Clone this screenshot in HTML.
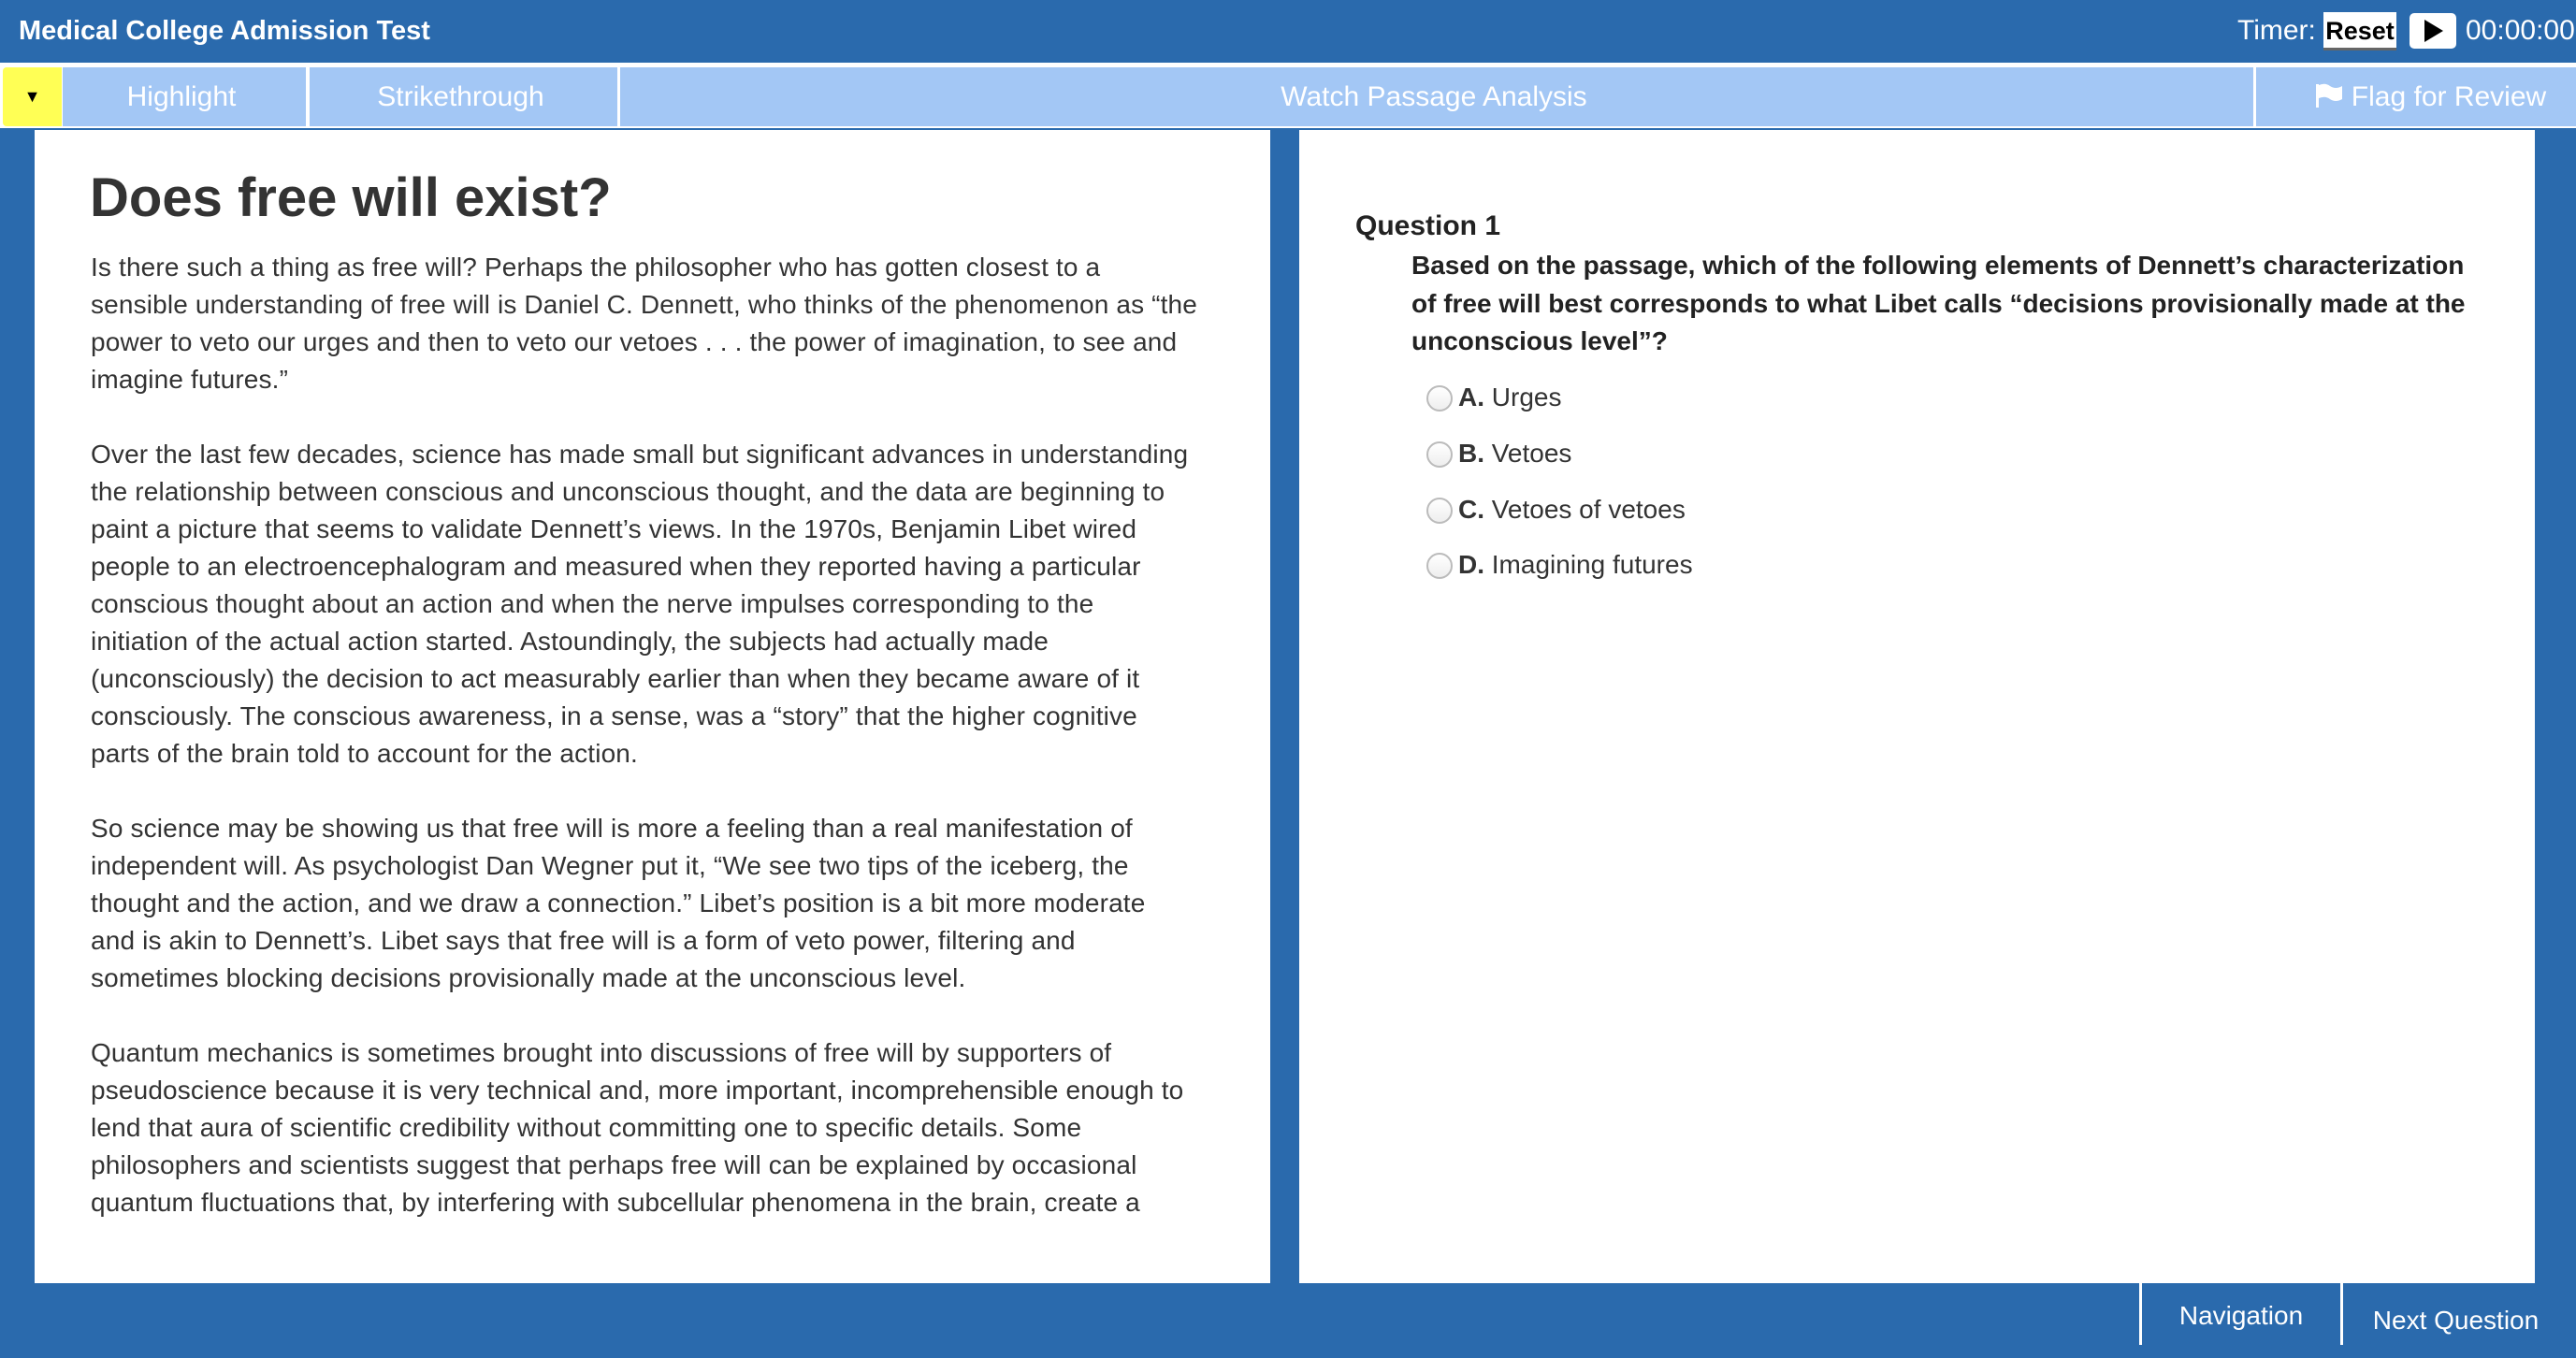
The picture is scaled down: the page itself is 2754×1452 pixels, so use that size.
<!DOCTYPE html>
<html><head><meta charset="utf-8"><style>
*{margin:0;padding:0;box-sizing:border-box}
body{width:2754px;height:1438px;background:#2a6aad;font-family:"Liberation Sans",Arial,sans-serif;position:relative;overflow:hidden}
.abs{position:absolute}
.title{left:20px;top:14px;font-size:29px;font-weight:bold;color:#fff;line-height:38px}
.tb{top:72px;height:63px;background:#a3c7f5;color:#fff;font-size:30px;line-height:63px;text-align:center}
.panel{background:#fff;top:139px;height:1233px}
.lt{left:97px;top:266px;width:1260px;font-size:28px;letter-spacing:0.15px;line-height:40px;color:#333;white-space:nowrap}
.lt p{margin-bottom:40px}
.q{color:#222}
.opt{left:1525px;font-size:28px;color:#333;line-height:40px}
.opt i{display:inline-block;width:28px;height:28px;border:2px solid #bbb;border-radius:50%;vertical-align:-6px;margin-right:6px;background:linear-gradient(#fff,#eee)}
.bb{color:#fff;font-size:28px;top:1372px;height:66px;border-left:3px solid #fff}
</style></head><body>
<div class="abs title">Medical College Admission Test</div>
<div class="abs" style="left:2392px;top:14px;font-size:30px;color:#fff;line-height:38px">Timer:</div>
<div class="abs" style="left:2484px;top:13px;width:78px;height:41px;background:#fff;border-bottom:3px solid #666;font-size:27px;font-weight:bold;color:#000;line-height:40px;text-align:center">Reset</div>
<div class="abs" style="left:2576px;top:14px;width:50px;height:38px;background:#fff;border-radius:5px"><svg width="50" height="38"><polygon points="16,7 36,19 16,31" fill="#000"/></svg></div>
<div class="abs" style="left:2636px;top:14px;font-size:30px;color:#fff;line-height:38px">00:00:00</div>
<div class="abs" style="left:0;top:67px;width:2754px;height:70px;background:#fff"></div>
<div class="abs tb" style="left:3px;width:63px;background:#ffff55;color:#000;font-size:18px;border-radius:4px 0 0 4px">▼</div>
<div class="abs tb" style="left:67px;width:260px;padding-right:6px">Highlight</div>
<div class="abs tb" style="left:331px;width:329px;padding-right:6px">Strikethrough</div>
<div class="abs tb" style="left:663px;width:1746px;padding-right:6px">Watch Passage Analysis</div>
<div class="abs tb" style="left:2412px;width:342px;padding-left:30px"><svg width="32" height="28" style="vertical-align:-3px;margin-right:8px"><rect x="2" y="2" width="3" height="25" fill="#fff"/><path d="M5 3 Q12 0 17 4 Q23 8 30 4 L30 18 Q23 22 17 18 Q12 14 5 17Z" fill="#fff"/></svg>Flag for Review</div>
<div class="abs panel" style="left:37px;width:1321px"></div>
<div class="abs panel" style="left:1389px;width:1321px"></div>
<div class="abs" style="left:96px;top:177px;font-size:58px;font-weight:bold;line-height:70px;color:#333">Does free will exist?</div>
<div class="abs lt">
<p>Is there such a thing as free will? Perhaps the philosopher who has gotten closest to a<br>sensible understanding of free will is Daniel C. Dennett, who thinks of the phenomenon as “the<br>power to veto our urges and then to veto our vetoes . . . the power of imagination, to see and<br>imagine futures.”</p>
<p>Over the last few decades, science has made small but significant advances in understanding<br>the relationship between conscious and unconscious thought, and the data are beginning to<br>paint a picture that seems to validate Dennett’s views. In the 1970s, Benjamin Libet wired<br>people to an electroencephalogram and measured when they reported having a particular<br>conscious thought about an action and when the nerve impulses corresponding to the<br>initiation of the actual action started. Astoundingly, the subjects had actually made<br>(unconsciously) the decision to act measurably earlier than when they became aware of it<br>consciously. The conscious awareness, in a sense, was a “story” that the higher cognitive<br>parts of the brain told to account for the action.</p>
<p>So science may be showing us that free will is more a feeling than a real manifestation of<br>independent will. As psychologist Dan Wegner put it, “We see two tips of the iceberg, the<br>thought and the action, and we draw a connection.” Libet’s position is a bit more moderate<br>and is akin to Dennett’s. Libet says that free will is a form of veto power, filtering and<br>sometimes blocking decisions provisionally made at the unconscious level.</p>
<p>Quantum mechanics is sometimes brought into discussions of free will by supporters of<br>pseudoscience because it is very technical and, more important, incomprehensible enough to<br>lend that aura of scientific credibility without committing one to specific details. Some<br>philosophers and scientists suggest that perhaps free will can be explained by occasional<br>quantum fluctuations that, by interfering with subcellular phenomena in the brain, create a</p>
</div>
<div class="abs q" style="left:1449px;top:222px;font-size:30px;font-weight:bold;line-height:40px">Question 1</div>
<div class="abs q" style="left:1509px;top:264px;font-size:28px;font-weight:bold;line-height:40.5px;white-space:nowrap">Based on the passage, which of the following elements of Dennett’s characterization<br>of free will best corresponds to what Libet calls “decisions provisionally made at the<br>unconscious level”?</div>
<div class="abs opt" style="top:405px"><i></i><b>A.</b> Urges</div>
<div class="abs opt" style="top:465px"><i></i><b>B.</b> Vetoes</div>
<div class="abs opt" style="top:525px"><i></i><b>C.</b> Vetoes of vetoes</div>
<div class="abs opt" style="top:584px"><i></i><b>D.</b> Imagining futures</div>
<div class="abs bb" style="left:2287px;width:215px;text-align:center;line-height:70px">Navigation</div>
<div class="abs bb" style="left:2502px;width:252px;text-align:center;line-height:80px;padding-right:8px">Next Question</div>
</body></html>
